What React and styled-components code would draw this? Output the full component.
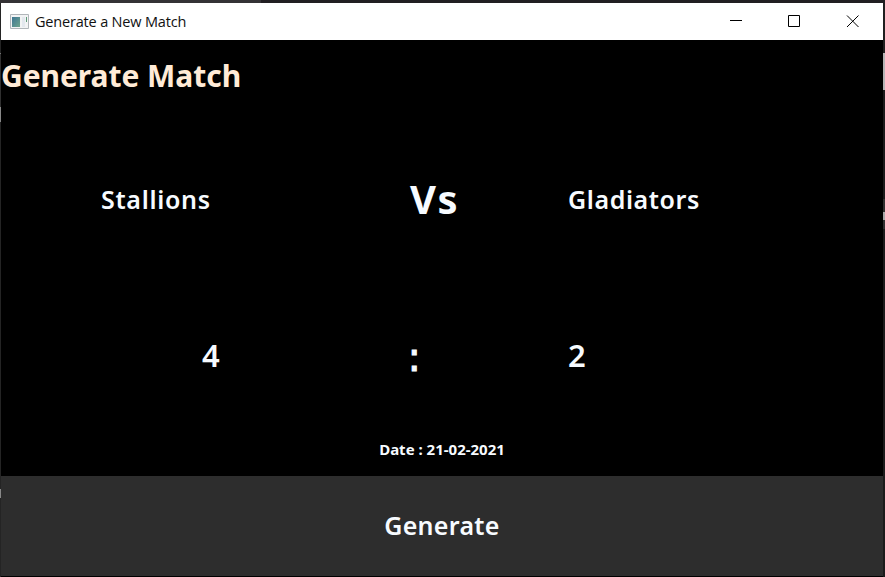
import React from "react";
import styled, { createGlobalStyle } from "styled-components";

const GlobalStyle = createGlobalStyle`
  * { box-sizing: border-box; }
  html, body { margin: 0; overflow: hidden; background: #262426; }
`;

const Desktop = styled.div`
  display: grid;
  grid-template-columns: 1px 882px 2px;
  width: 885px;
  height: 577px;
  padding-top: 3px;
  background: linear-gradient(90deg, #343235 261px, #211f22 261px) top / 100% 3px no-repeat, #262426;
`;

const LeftEdge = styled.div`
  background: linear-gradient(#242424 0 50px, #777 50px 51px, #303030 51px 104px, #888 104px 119px, #242424 119px 486px, #888 486px 495px, #242424 495px);
`;

const RightEdge = styled.div`
  background: linear-gradient(#202020 0 50px, #b5b5b5 50px 87px, #1b1b1b 87px 196px, #303030 196px 209px, #a8a8a8 209px 217px, #303030 217px 226px, #1b1b1b 226px);
`;

const Window = styled.main`
  display: grid;
  grid-template-rows: 37px 436px 100px 1px;
  background: #000;
`;

const TitleBar = styled.header`
  display: flex;
  align-items: center;
  background: #fff;
  padding: 0 1px 0 9px;
`;

const AppIcon = styled.svg`
  width: 19px;
  height: 16px;
  flex: none;
`;

const WindowTitle = styled.h1`
  margin: 0 auto 0 6px;
  font: 400 14.5px/20px "Open Sans", "Noto Sans", sans-serif;
  letter-spacing: -0.18px;
  color: #111;
  white-space: nowrap;
`;

const WindowButton = styled.button`
  display: grid;
  place-items: center;
  width: 58.5px;
  height: 37px;
  padding: 0;
  border: 0;
  background: transparent;
  svg { width: 13px; height: 13px; fill: none; stroke: #000; stroke-width: 1; }
`;

const Board = styled.section`
  display: grid;
  grid-template-rows: 71px 176px 138px 48px;
`;

const Heading = styled.div`
  display: flex;
  align-items: center;
`;

const MatchRow = styled.div`
  display: grid;
  grid-template-columns: 409px 158px 1fr;
  align-items: center;
`;

const Cell = styled.div`
  padding-left: ${(p) => p.$indent || 0}px;
`;

const Label = styled.span`
  display: inline-block;
  font: ${(p) => p.$weight || 600} ${(p) => p.$size}px/1.2 "Noto Sans", "Open Sans", sans-serif;
  letter-spacing: ${(p) => p.$tracking || 0}px;
  color: ${(p) => p.$color || "#f7fbff"};
  white-space: nowrap;
`;

const Colon = styled(Label)`
  font-family: "DejaVu Sans", sans-serif;
  font-weight: 400;
  -webkit-text-stroke: 1px #f7fbff;
  margin: 1px 0 0 -2.5px;
`;

const DateLine = styled.div`
  display: flex;
  justify-content: center;
  align-items: center;
`;

const GenerateButton = styled.button`
  border: 0;
  padding: 0 0 2px;
  background: #2d2d2d;
`;

export default function App() {
  return (
    <Desktop>
      <GlobalStyle />
      <LeftEdge />
      <Window>
        <TitleBar>
          <AppIcon viewBox="0 0 19 16">
            <defs>
              <linearGradient id="pane" x2="1" y2="1">
                <stop stopColor="#3e7593" />
                <stop offset="1" stopColor="#6ea58d" />
              </linearGradient>
            </defs>
            <path d="M.5.5h18v14H.5z" fill="#f2f3f4" stroke="#b1b6ba" />
            <path d="M2 3h8v10H2z" fill="url(#pane)" />
            <path d="M12 3h3v10h-3z" fill="#e3e8ee" />
            <path d="M16 3h1v5h-1z" fill="#5d9a78" />
          </AppIcon>
          <WindowTitle>Generate a New Match</WindowTitle>
          <WindowButton aria-label="Minimize">
            <svg viewBox="0 0 13 13"><path d="M1 5.5h12" /></svg>
          </WindowButton>
          <WindowButton aria-label="Maximize">
            <svg viewBox="0 0 13 13"><path d="M.5 .5h11v11H.5z" /></svg>
          </WindowButton>
          <WindowButton aria-label="Close">
            <svg viewBox="0 0 13 13"><path d="M1 .5l11.5 11.5M12.5 .5l-11.5 11.5" /></svg>
          </WindowButton>
        </TitleBar>
        <Board>
          <Heading><Label $size={30} $weight={700} $tracking={-0.05} $color="#ffebd7">Generate Match</Label></Heading>
          <MatchRow>
            <Cell $indent={100}><Label $size={25} $tracking={0.7}>Stallions</Label></Cell>
            <Cell><Label $size={40} $weight={700} $tracking={2}>Vs</Label></Cell>
            <Cell><Label $size={25} $tracking={0.6}>Gladiators</Label></Cell>
          </MatchRow>
          <MatchRow>
            <Cell $indent={201}><Label $size={31}>4</Label></Cell>
            <Cell><Colon $size={40}>:</Colon></Cell>
            <Cell><Label $size={31}>2</Label></Cell>
          </MatchRow>
          <DateLine><Label $size={15} $weight={700}>Date : 21-02-2021</Label></DateLine>
        </Board>
        <GenerateButton><Label $size={25} $tracking={0.3}>Generate</Label></GenerateButton>
      </Window>
      <RightEdge />
    </Desktop>
  );
}
